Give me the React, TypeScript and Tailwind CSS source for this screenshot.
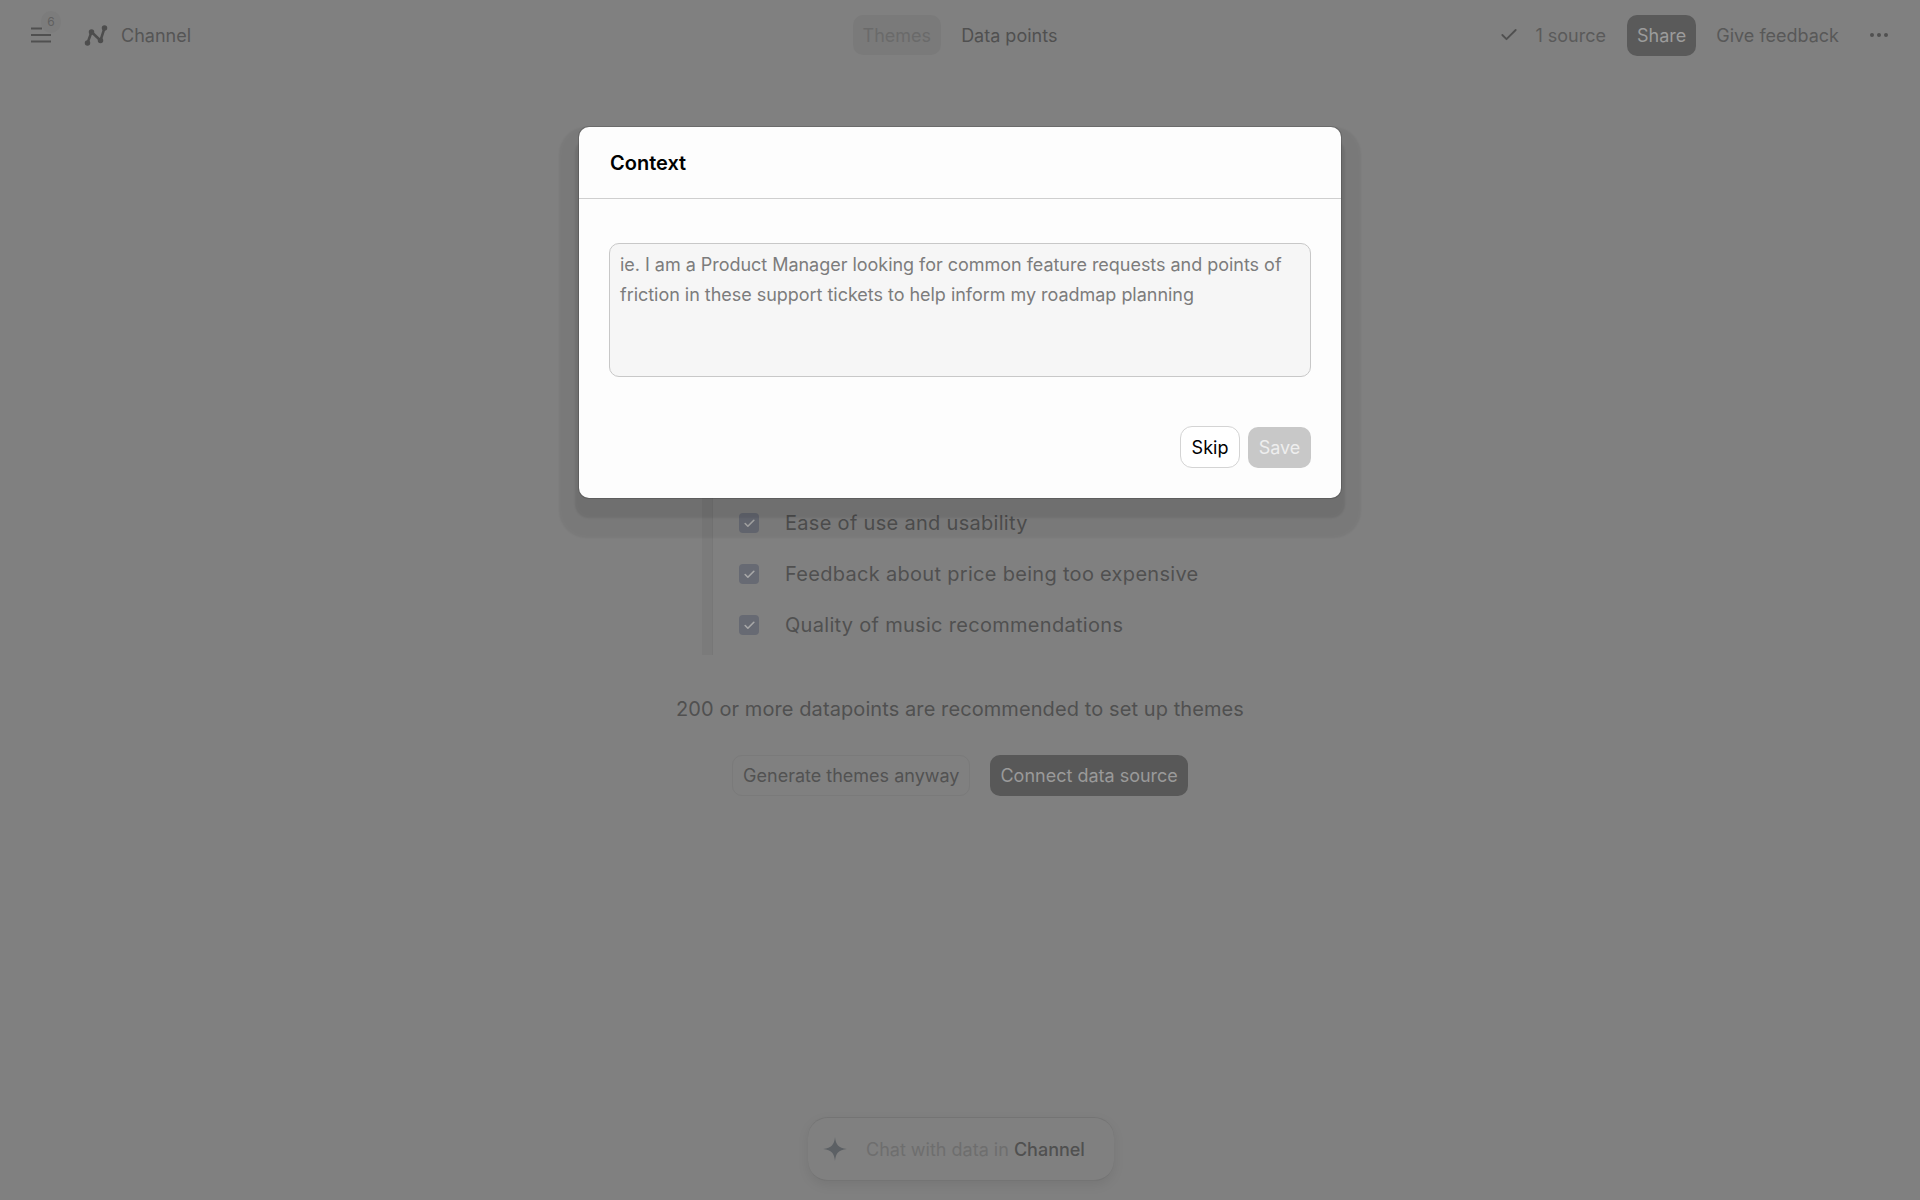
import { Check, MoreHorizontal } from 'lucide-react';

const themes = ['Ease of use and usability', 'Feedback about price being too expensive', 'Quality of music recommendations'];

function Header() {
  return (
    <header className="flex h-[70px] items-center justify-between pl-[29px] pr-[29px]">
      <div className="flex w-[500px] items-center">
        <div className="relative h-[24px] w-[24px]">
          <svg viewBox="0 0 24 24" className="h-[24px] w-[24px]" fill="none" stroke="#505050" strokeWidth="2">
            <path d="M2 5.500h11M2 12h20M2 18.500h20" />
          </svg>
          <span className="absolute -top-[12px] right-[-8px] flex h-[22px] w-[20px] items-center justify-center rounded-full bg-[#7c7c7c] text-[12px] text-[#606060]">6</span>
        </div>
        <svg viewBox="0 0 24 24" className="ml-[31px] h-[24px] w-[24px]" fill="#4d4d4d" stroke="#4d4d4d" strokeWidth="2.500">
          <path d="M3.500 20 7.500 9l9 8.500L20.500 5" fill="none" strokeLinejoin="round" />
          <circle cx="3.500" cy="20" r="1.500" />
          <circle cx="7.500" cy="9" r="1.500" />
          <circle cx="16.500" cy="17.500" r="1.500" />
          <circle cx="20.500" cy="5" r="1.500" />
        </svg>
        <span className="ml-[13px] text-[18px] text-[#555555]">Channel</span>
      </div>
      <nav className="flex items-center gap-[10px] text-[18px]">
        <span className="flex h-[40px] items-center rounded-[10px] bg-[#7a7a7a] px-[10px] text-[#6a6a6a]">Themes</span>
        <span className="flex h-[40px] items-center px-[10px] text-[#505050]">Data points</span>
      </nav>
      <div className="flex w-[500px] items-center justify-end text-[18px]">
        <Check className="h-[20px] w-[20px] text-[#505050]" strokeWidth={2.250} />
        <span className="ml-[16px] text-[#5a5a5a]">1 source</span>
        <span className="ml-[21px] flex h-[41px] items-center rounded-[10px] bg-[#5a5a5a] px-[10px] text-[#9c9c9c]">Share</span>
        <span className="ml-[20px] text-[#585858]">Give feedback</span>
        <MoreHorizontal className="ml-[28px] h-[24px] w-[24px] text-[#505050]" />
      </div>
    </header>
  );
}

function Main() {
  return (
    <main className="flex flex-col items-center pt-[433px]">
      <div className="flex h-[152px] w-[566px] items-stretch pl-[25px]">
        <div className="-mt-[24px] w-[11px] border-r border-[#777777] bg-[#7b7b7b]" />
        <ul className="ml-[26px] flex flex-col gap-[27px] pt-[8px]">
          {themes.map((t) => (
            <li key={t} className="flex h-[24px] items-center text-[20px] tracking-[0.3px] text-[#505050]">
              <span className="flex h-[20px] w-[20px] items-center justify-center rounded-[4px] bg-[#676a73]">
                <Check className="h-[13px] w-[13px] text-[#a8a8a8]" strokeWidth={3} />
              </span>
              <span className="ml-[26px]">{t}</span>
            </li>
          ))}
        </ul>
      </div>
      <p className="mt-[40px] text-[20px] leading-[28px] tracking-[0.09px] text-[#505050]">200 or more datapoints are recommended to set up themes</p>
      <div className="mt-[32px] flex gap-[20px] text-[18px]">
        <button className="h-[41px] rounded-[10px] border border-[#7a7a7a] px-[10px] text-[#525252]">Generate themes anyway</button>
        <button className="h-[41px] rounded-[10px] bg-[#585858] px-[10px] text-[#9a9a9a]">Connect data source</button>
      </div>
    </main>
  );
}

function ChatBar() {
  return (
    <div className="absolute bottom-[19px] left-[808px] flex h-[64px] w-[306px] items-center rounded-[20px] border-y border-[#747474] bg-[#808080] pl-[14px] text-[18px] shadow-[0_4px_12px_rgba(0,0,0,0.08)]">
      <svg viewBox="0 0 24 24" className="h-[26px] w-[26px]" fill="#5c6064">
        <path d="M12 1c.8 7 3 10 11 11-8 1-10.200 4-11 11-.8-7-3-10-11-11 8-1 10.200-4 11-11z" />
      </svg>
      <span className="ml-[18px] text-[#6e6e6e]">Chat with data in <span className="font-medium text-[#505050]">Channel</span></span>
    </div>
  );
}

function ContextModal() {
  return (
    <div className="absolute left-[579px] top-[127px] h-[371px] w-[762px] rounded-[10px] bg-[#fdfdfd] shadow-[0_0_0_1px_rgba(0,0,0,0.15),0_16px_2px_4px_rgba(0,0,0,0.08),0_20px_2px_20px_rgba(0,0,0,0.05)]">
      <div className="flex h-[72px] items-center border-b border-[#cfcfcf] px-[31px] text-[20px] font-semibold text-black">Context</div>
      <div className="px-[30px] pt-[44px]">
        <textarea
          placeholder="ie. I am a Product Manager looking for common feature requests and points of friction in these support tickets to help inform my roadmap planning"
          className="block h-[134px] w-full resize-none rounded-[10px] border border-[#c8c8c8] bg-[#f6f6f6] px-[10px] py-[6px] text-[18px] leading-[30px] tracking-[-0.03px] outline-none placeholder:text-[#7c7c7c]"
        />
        <div className="mt-[49px] flex items-center justify-end gap-[8px] text-[18px]">
          <button className="h-[42px] w-[60px] rounded-[12px] border border-[#d4d4d4] bg-white text-black">Skip</button>
          <button className="h-[41px] w-[63px] rounded-[10px] bg-[#c8c8c8] text-[#eeeeee]">Save</button>
        </div>
      </div>
    </div>
  );
}

export default function App() {
  return (
    <div className="relative h-[1200px] w-[1920px] overflow-hidden bg-[#808080] font-['Inter',sans-serif]">
      <Header />
      <Main />
      <ChatBar />
      <ContextModal />
    </div>
  );
}
